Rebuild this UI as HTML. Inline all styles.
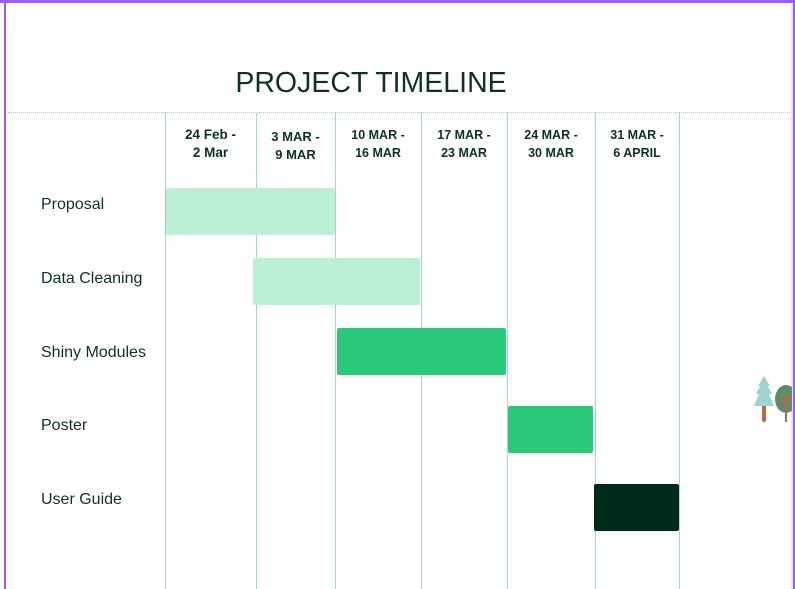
<!DOCTYPE html>
<html><head><style>
body{margin:0;width:795px;height:589px;position:relative;background:#fff;font-family:"Liberation Sans",sans-serif;overflow:hidden;color:#0d3320}
.a{position:absolute}
.v{position:absolute;top:113px;height:476px;width:1px;background:#9fdcbd}
.h{position:absolute;top:126px;font-size:12.5px;font-weight:bold;text-align:center;line-height:18px;color:#0d3320}
.l{position:absolute;left:41px;font-size:16px;color:#0d3320}
.b{position:absolute;border-radius:2px}
</style></head><body>
<div class="a" style="left:0;top:0;width:795px;height:3px;background:#9a5cf5"></div>
<div class="a" style="left:4px;top:0;width:2px;height:589px;background:#9a5cf5"></div>
<div class="a" style="left:791px;top:3px;width:2px;height:586px;background:#e8e8ec"></div>
<div class="a" style="left:793px;top:0;width:2px;height:589px;background:#9a5cf5"></div>
<div class="a" style="left:0;top:67px;width:742px;text-align:center;font-size:28.5px;color:#0d3320">PROJECT TIMELINE</div>
<div class="a" style="left:8px;top:112px;width:782px;border-top:1px dotted #8fdcb6"></div>
<div class="v" style="left:165px"></div><div class="v" style="left:256px"></div><div class="v" style="left:335px"></div><div class="v" style="left:421px"></div><div class="v" style="left:507px"></div><div class="v" style="left:595px"></div><div class="v" style="left:679px"></div>
<div class="h" style="left:165px;width:91px;font-size:13.5px">24 Feb -<br>2 Mar</div>
<div class="h" style="left:256px;width:79px;top:128px;font-size:13px">3 MAR -<br>9 MAR</div>
<div class="h" style="left:335px;width:86px">10 MAR -<br>16 MAR</div>
<div class="h" style="left:421px;width:86px">17 MAR -<br>23 MAR</div>
<div class="h" style="left:507px;width:88px">24 MAR -<br>30 MAR</div>
<div class="h" style="left:595px;width:84px">31 MAR -<br>6 APRIL</div>
<div class="l" style="top:196px">Proposal</div>
<div class="l" style="top:270px">Data Cleaning</div>
<div class="l" style="top:344px">Shiny Modules</div>
<div class="l" style="top:417px">Poster</div>
<div class="l" style="top:491px">User Guide</div>
<div class="b" style="left:166px;top:188px;width:169px;height:47px;background:#bbf0d5"></div>
<div class="b" style="left:253px;top:258px;width:167px;height:47px;background:#bbf0d5"></div>
<div class="b" style="left:337px;top:328px;width:169px;height:47px;background:#2dc97a"></div>
<div class="b" style="left:508px;top:406px;width:85px;height:47px;background:#2dc97a"></div>
<div class="b" style="left:594px;top:484px;width:85px;height:47px;background:#002a1a"></div>
<svg class="a" style="left:750px;top:374px" width="42" height="52">
<rect x="12" y="28" width="4" height="20" rx="2" fill="#c0663a"/>
<path d="M14 2 L20 12 L18 12 L22 20 L19 20 L24 32 L4 32 L9 20 L6 20 L10 12 L8 12 Z" fill="#9fd3d3"/>
<ellipse cx="36" cy="25" rx="11" ry="14" fill="#5f8a6e"/>
<path d="M36 48 L36 22 M36 30 L31 24 M36 27 L40 22" stroke="#c0663a" stroke-width="2" fill="none"/>
</svg>
</body></html>
